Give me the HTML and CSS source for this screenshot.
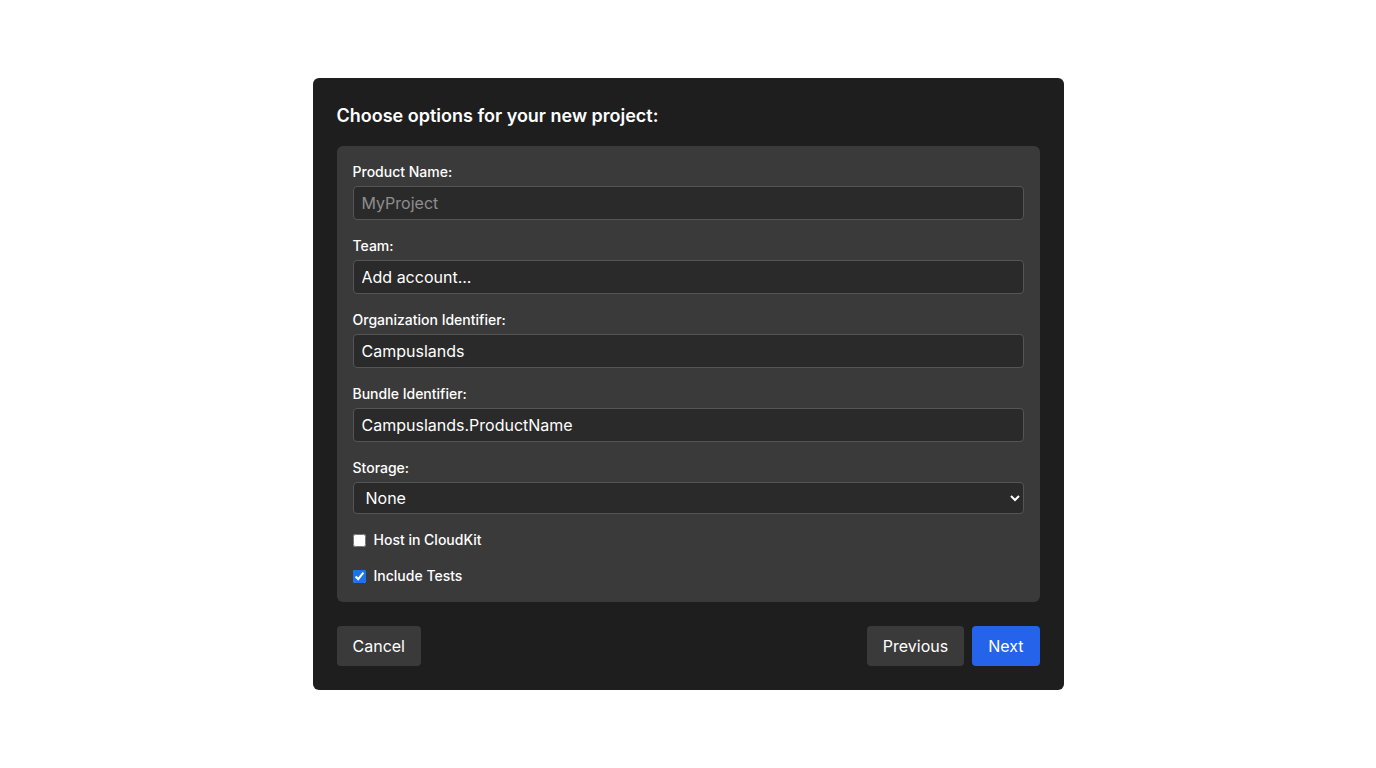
FILE: index.html
```html
<!DOCTYPE html>
<html lang="en">
<head>
<meta charset="utf-8">
<title>New Project</title>
<link rel="stylesheet" href="styles.css">
</head>
<body>
<div class="page">
  <form class="dialog">
    <h2 class="title">Choose options for your new project:</h2>
    <div class="panel">
      <div class="field">
        <label class="label">Product Name:</label>
        <input class="input" type="text" placeholder="MyProject">
      </div>
      <div class="field">
        <label class="label">Team:</label>
        <input class="input" type="text" value="Add account...">
      </div>
      <div class="field">
        <label class="label">Organization Identifier:</label>
        <input class="input" type="text" value="Campuslands">
      </div>
      <div class="field">
        <label class="label">Bundle Identifier:</label>
        <input class="input" type="text" value="Campuslands.ProductName">
      </div>
      <div class="field">
        <label class="label">Storage:</label>
        <select class="select"><option>None</option></select>
      </div>
      <label class="check"><input type="checkbox" class="box"><span>Host in CloudKit</span></label>
      <label class="check"><input type="checkbox" class="box" checked><span>Include Tests</span></label>
    </div>
    <div class="footer">
      <button type="button" class="btn">Cancel</button>
      <div class="right">
        <button type="button" class="btn">Previous</button>
        <button type="button" class="btn primary">Next</button>
      </div>
    </div>
  </form>
</div>
</body>
</html>
```
FILE: styles.css
```css
* { box-sizing: border-box; }
html, body { margin: 0; padding: 0; background: #ffffff; }
body { font-family: Inter, "Noto Sans", sans-serif; color: #ffffff; }
.page { display: flex; justify-content: center; padding-top: 78px; }
.dialog {
  width: 751px;
  background: #1e1e1e;
  border-radius: 6px;
  padding: 24px;
}
.title {
  margin: 0 0 16px;
  font-size: 18px;
  line-height: 28px;
  font-weight: 600;
  color: #ffffff;
}
.panel {
  background: #3a3a3a;
  border-radius: 6px;
  padding: 16px;
  display: flex;
  flex-direction: column;
  gap: 16px;
}
.field { display: flex; flex-direction: column; gap: 4px; }
.label { font-size: 14px; line-height: 20px; font-weight: 500; color: #ffffff; }
.input, .select {
  font-family: inherit;
  font-size: 16px;
  line-height: 20px;
  color: #ffffff;
  background: #2a2a2a;
  border: 1px solid #555555;
  border-radius: 4px;
  padding: 6px 8px;
  height: 34px;
  width: 100%;
  outline: none;
}
.input::placeholder { color: #8e8e8e; }
.select { height: 32px; padding: 4px 4px 4px 8px; color-scheme: dark; }
.check {
  display: flex;
  align-items: center;
  gap: 8px;
  font-size: 14px;
  line-height: 20px;
  font-weight: 500;
  color: #ffffff;
}
.box { margin: 0; width: 13px; height: 13px; accent-color: #1a73e8; }
.footer {
  display: flex;
  justify-content: space-between;
  margin-top: 24px;
}
.right { display: flex; gap: 8px; }
.btn {
  font-family: inherit;
  font-size: 16px;
  line-height: 24px;
  padding: 8px 16px;
  border: none;
  border-radius: 4px;
  background: #3a3a3a;
  color: #ffffff;
  cursor: pointer;
}
.btn.primary { background: #2563eb; }
```
